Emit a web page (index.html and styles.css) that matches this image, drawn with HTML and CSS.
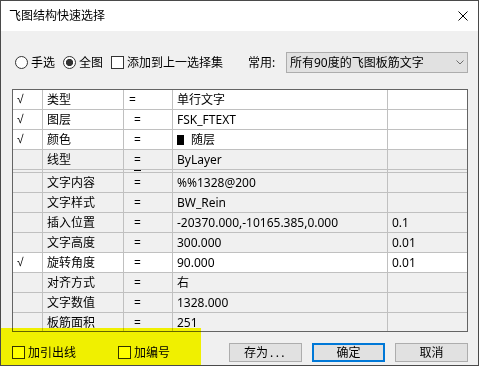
FILE: index.html
```html
<!DOCTYPE html>
<html lang="zh">
<head>
<meta charset="utf-8">
<title>飞图结构快速选择</title>
<link rel="stylesheet" href="styles.css">
</head>
<body>
<div class="window">
  <div class="titlebar">
    <span class="title">飞图结构快速选择</span>
    <svg class="close" width="10" height="10" viewBox="0 0 10 10"><path d="M0.5 0.5L9.5 9.5M9.5 0.5L0.5 9.5" stroke="#000" stroke-width="1" fill="none"/></svg>
  </div>
  <div class="body">
    <div class="options">
      <label class="radio"><span class="circle"></span>手选</label>
      <label class="radio on"><span class="circle"></span>全图</label>
      <label class="check"><span class="box"></span>添加到上一选择集</label>
      <span class="common">常用:</span>
      <div class="combo">
        <span>所有90度的飞图板筋文字</span>
        <svg width="8" height="5" viewBox="0 0 8 5"><path d="M0.5 0.5L4 4L7.5 0.5" stroke="#6d6d6d" stroke-width="1" fill="none"/></svg>
      </div>
    </div>
    <div class="grid">
      <div class="row on"><span class="mark">√</span><span>类型</span><span class="eq first">=</span><span>单行文字</span><span></span></div>
      <div class="row on"><span class="mark">√</span><span>图层</span><span class="eq">=</span><span>FSK_FTEXT</span><span></span></div>
      <div class="row on"><span class="mark">√</span><span>颜色</span><span class="eq">=</span><span><i class="swatch"></i>随层</span><span></span></div>
      <div class="row"><span></span><span>线型</span><span class="eq">=</span><span>ByLayer</span><span></span></div>
      <div class="row sliver"><span></span><span></span><span class="eq"><i class="dash"></i></span><span></span><span></span></div>
      <div class="row"><span></span><span>文字内容</span><span class="eq">=</span><span>%%1328@200</span><span></span></div>
      <div class="row"><span></span><span>文字样式</span><span class="eq">=</span><span>BW_Rein</span><span></span></div>
      <div class="row"><span></span><span>插入位置</span><span class="eq">=</span><span>-20370.000,-10165.385,0.000</span><span>0.1</span></div>
      <div class="row"><span></span><span>文字高度</span><span class="eq">=</span><span>300.000</span><span>0.01</span></div>
      <div class="row on"><span class="mark">√</span><span>旋转角度</span><span class="eq">=</span><span>90.000</span><span>0.01</span></div>
      <div class="row"><span></span><span>对齐方式</span><span class="eq">=</span><span>右</span><span></span></div>
      <div class="row"><span></span><span>文字数值</span><span class="eq">=</span><span>1328.000</span><span></span></div>
      <div class="row"><span></span><span>板筋面积</span><span class="eq">=</span><span>251</span><span></span></div>
    </div>
    <div class="footer">
      <label class="check"><span class="box"></span>加引出线</label>
      <label class="check second"><span class="box"></span>加编号</label>
      <div class="buttons">
        <button class="btn">存为<span class="dots">...</span></button>
        <button class="btn default">确定</button>
        <button class="btn">取消</button>
      </div>
    </div>
  </div>
  <div class="highlight"></div>
</div>
</body>
</html>
```

FILE: styles.css
```css
html, body {
  margin: 0;
  padding: 0;
}
body {
  font: 12px/16px "Noto Sans", "Noto Sans CJK SC", sans-serif;
  color: #000;
  background: #f0f0f0;
}
.window {
  position: relative;
  width: 479px;
  height: 366px;
  box-sizing: border-box;
  border: 1px solid #4a4a4a;
  display: flex;
  flex-direction: column;
  background: #f0f0f0;
  overflow: hidden;
}
.titlebar {
  flex: none;
  height: 30px;
  background: #fff;
  display: flex;
  align-items: center;
  justify-content: space-between;
  padding: 0 10px 0 8px;
}
.title {
  font-size: 12px;
}
.close {
  display: block;
}
.body {
  flex: 1;
  display: flex;
  flex-direction: column;
  padding: 21px 10px 0 11px;
}
.options {
  height: 21px;
  display: flex;
  align-items: center;
  padding-left: 3px;
}
.radio, .check {
  display: flex;
  align-items: center;
  white-space: nowrap;
}
.circle {
  width: 13px;
  height: 13px;
  box-sizing: border-box;
  border: 1px solid #333;
  border-radius: 50%;
  background: #fff;
  margin-right: 3px;
}
.radio {
  margin-right: 8px;
}
.radio.on .circle {
  background: radial-gradient(circle, #333 0, #333 3.3px, #fff 3.9px);
}
.box {
  width: 13px;
  height: 13px;
  box-sizing: border-box;
  border: 1px solid #333;
  background: #fff;
  margin-right: 3px;
}
.common {
  margin-left: auto;
  width: 30px;
  margin-right: 8px;
  white-space: nowrap;
}
.combo {
  width: 182px;
  height: 21px;
  box-sizing: border-box;
  border: 1px solid #adadad;
  background: #e1e1e1;
  display: flex;
  align-items: center;
  justify-content: space-between;
  padding: 0 3px 0 3px;
}
.combo svg {
  display: block;
}
.grid {
  margin-top: 16px;
  height: 243px;
  flex: none;
  box-sizing: border-box;
  border: 1px solid #646464;
  overflow: hidden;
  background: #f0f0f0;
}
.row {
  display: grid;
  grid-template-columns: 30px 81px 49px 215px 1fr;
  height: 20px;
  box-sizing: border-box;
  border-bottom: 1px solid #c0c0c0;
}
.row > span {
  border-right: 1px solid #c0c0c0;
  padding-left: 4px;
  line-height: 19px;
  white-space: nowrap;
  overflow: hidden;
}
.row > span:last-child {
  border-right: none;
}
.row > span.mark {
  font-family: "Liberation Sans", sans-serif;
  padding-left: 4px;
}
.row.on {
  background: #fff;
}
.row > span.eq {
  padding-left: 10px;
}
.row > span.eq.first {
  padding-left: 5px;
}
.row.sliver {
  height: 3px;
}
.row.sliver > span {
  line-height: 2px;
}
.dash {
  display: block;
  width: 7px;
  height: 1px;
  background: #000;
  margin-top: 0;
}
.swatch {
  display: inline-block;
  width: 7px;
  height: 10px;
  background: #000;
  margin-right: 7px;
  vertical-align: -1px;
}
.footer {
  margin-top: 11px;
  height: 19px;
  display: flex;
  align-items: center;
}
.check.second {
  margin-left: 42px;
}
.buttons {
  margin-left: auto;
  display: flex;
  gap: 10px;
}
.btn {
  width: 73px;
  height: 19px;
  box-sizing: border-box;
  border: 1px solid #adadad;
  background: #e1e1e1;
  font: 12px/17px "Noto Sans", "Noto Sans CJK SC", sans-serif;
  color: #000;
  padding: 0;
  margin: 0;
  text-align: center;
}
.btn.default {
  border: 2px solid #0078d7;
  line-height: 15px;
}
.dots {
  letter-spacing: 2.5px;
  margin-left: 2px;
}
.highlight {
  position: absolute;
  left: 0;
  top: 327px;
  width: 200px;
  height: 40px;
  background: #ffff00;
  mix-blend-mode: multiply;
  pointer-events: none;
}
```
